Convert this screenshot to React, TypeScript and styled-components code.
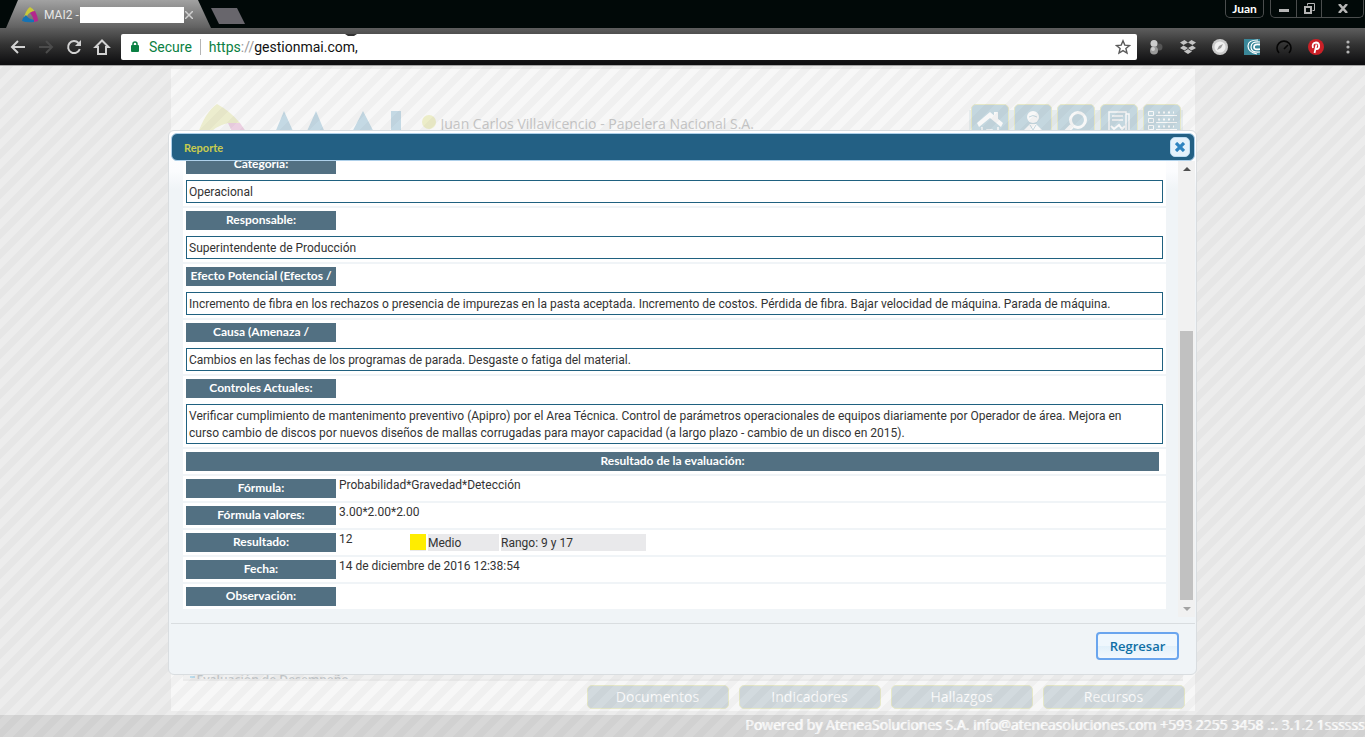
import React from "react";
import styled, { createGlobalStyle } from "styled-components";

const bodyFont = 'Roboto, "Open Sans", sans-serif';
const labelFont = 'Lato, "Open Sans", sans-serif';
const wideFont = '"Open Sans", "Noto Sans", sans-serif';

const GlobalStyle = createGlobalStyle`
  *, *::before, *::after { box-sizing: border-box; }
  html, body { margin: 0; height: 100%; }
  body { font-family: ${bodyFont}; font-size: 12px; color: #333; overflow: hidden; }
  button, input { font: inherit; color: inherit; margin: 0; padding: 0; border: 0; background: none; }
  a { color: inherit; text-decoration: none; }
  svg { display: block; flex: none; }
`;

const Screen = styled.div`
  display: flex;
  flex-direction: column;
  height: 100vh;
`;

/* ---------- browser chrome ---------- */

const TabStrip = styled.div`
  display: flex;
  align-items: flex-start;
  height: 28px;
  padding: 0 1px 0 6px;
  background: #010908;
`;

const Tab = styled.div`
  display: flex;
  align-items: center;
  gap: 6px;
  width: 205px;
  height: 28px;
  padding: 2px 17px 0 16px;
  color: #e6e6e6;
  background: linear-gradient(#a2a2a2, #606060);
  clip-path: polygon(12px 0, 192px 0, 205px 100%, 0 100%);
`;

const TabTitle = styled.span`
  display: flex;
  align-items: center;
  flex: 1;
  gap: 1px;
  white-space: nowrap;
`;

const Redaction = styled.span`
  flex: 1;
  height: 16px;
  margin-right: -6px;
  background: #fff;
`;

const IconButton = styled.button`
  display: flex;
  align-items: center;
  justify-content: center;
  flex: none;
  width: ${(p: { $size?: number }) => p.$size ?? 16}px;
  height: ${(p: { $size?: number }) => p.$size ?? 16}px;
`;

const NewTab = styled.button`
  width: 34px;
  height: 16px;
  margin-top: 8px;
  background: #68666c;
  clip-path: polygon(0 0, 26px 0, 34px 100%, 8px 100%);
`;

const WindowControls = styled.div`
  display: flex;
  gap: 6px;
  margin-left: auto;
`;

const ControlGroup = styled.div`
  display: flex;
  height: 18px;
  border: 1px solid #4a4d4d;
  border-top: 0;
  border-radius: 0 0 5px 5px;
  color: #fff;
  font-family: ${labelFont};
  font-weight: 700;
`;

const WindowButton = styled.button`
  display: flex;
  align-items: center;
  justify-content: center;
  width: ${(p: { $width: number }) => p.$width}px;
  height: 17px;
  & + & { border-left: 1px solid #4a4d4d; }
`;

const Toolbar = styled.div`
  display: flex;
  align-items: center;
  height: 38px;
  padding: 0 9px 0 8px;
  background: linear-gradient(#5e5e5e, #333 45%, #0f0f11 95%);
  border-bottom: 1px solid #a5a5a5;
`;

const NavButtons = styled.div`
  display: flex;
  gap: 8px;
  padding-right: 9px;
`;

const AddressBar = styled.div`
  position: relative;
  display: flex;
  align-items: center;
  flex: 1;
  height: 26px;
  padding: 0 6px 0 8px;
  background: #fff;
  border-radius: 2px;
  font-size: 14px;
  color: #111;
`;

const Secure = styled.span`
  padding: 0 8px;
  border-right: 1px solid #b5b5b5;
  margin-right: 8px;
  line-height: 16px;
  color: #0b8043;
`;

const Scheme = styled.span`
  color: #0b8043;
  i { font-style: normal; color: #999; }
`;

const UrlInput = styled.input`
  flex: 1;
  min-width: 0;
  outline: none;
`;

const PatchEdge = styled.svg`
  position: absolute;
  left: 223px;
  top: 0;
`;

const Extensions = styled.div`
  display: flex;
  gap: 16px;
  padding-left: 11px;
`;

/* ---------- page behind the dialog ---------- */

const Page = styled.div`
  position: relative;
  display: flex;
  flex-direction: column;
  flex: 1;
  min-height: 0;
  padding-top: 3px;
  background: #ececec;
  font-family: ${wideFont};
`;

const Sheet = styled.div`
  display: flex;
  flex-direction: column;
  flex: 1;
  min-height: 0;
  width: 1024px;
  max-width: 100%;
  margin: 0 auto 4px;
  background: #f7f7f7;
`;

const SheetHeader = styled.header`
  display: flex;
  align-items: flex-start;
  height: 96px;
  padding: 35px 12px 0 26px;
`;

const UserName = styled.div`
  display: flex;
  gap: 3px;
  flex: 1;
  padding-top: 10px;
  font-size: 14px;
  line-height: 20px;
  color: #c6c6c6;
`;

const Shortcuts = styled.nav`
  display: flex;
  gap: 5px;
  padding: 0 2px;
  background: linear-gradient(transparent 6px, #e6ecee 6px);
`;

const Shortcut = styled.a`
  display: flex;
  justify-content: center;
  width: 38px;
  height: 38px;
  padding-top: 6px;
  border: 1px solid #e6e8c8;
  border-radius: 5px;
  background: #c4d7df;
`;

const Panel = styled.section`
  display: flex;
  flex-direction: column;
  justify-content: flex-end;
  flex: 1;
  min-height: 0;
  margin: 0 12px;
  border-bottom: 2px solid #ebebeb;
  background: #f0f0f0;
`;

const PanelLink = styled.a`
  display: flex;
  gap: 2px;
  height: 6px;
  padding-left: 7px;
  overflow: hidden;
  line-height: 14px;
  font-weight: 600;
  color: #c4c8cb;
`;

const SheetNav = styled.nav`
  display: flex;
  justify-content: flex-end;
  gap: 10px;
  padding: 4px 10px 2px;
`;

const NavLink = styled.a`
  width: 142px;
  height: 24px;
  border: 1px solid #e6e8c8;
  border-radius: 5px;
  background: #d2dade;
  color: #fbfbfb;
  font-size: 14px;
  line-height: 21px;
  text-align: center;
`;

const PageFooter = styled.footer`
  height: 22px;
  padding-left: 745px;
  overflow: hidden;
  white-space: nowrap;
  background: #d7d7d7;
  color: #fbfbfb;
  font-size: 14px;
  line-height: 20px;
  text-shadow: 1px 0 0 #f8f8f8;
`;

/* ---------- modal dialog ---------- */

const Overlay = styled.div`
  position: absolute;
  inset: 0;
  display: flex;
  justify-content: center;
  padding: 64px 0 62px;
  background: linear-gradient(
      135deg,
      transparent 25%,
      rgba(0, 0, 0, 0.028) 25%,
      rgba(0, 0, 0, 0.028) 50%,
      transparent 50%,
      transparent 75%,
      rgba(0, 0, 0, 0.028) 75%
    )
    0 14px / 20px 20px;
`;

const Dialog = styled.div`
  display: flex;
  flex-direction: column;
  width: 1029px;
  max-width: 100%;
  padding: 2px 1px 2px 2px;
  border: 1px solid #d9dde0;
  border-radius: 6px;
  background: linear-gradient(#fff, #fbfcfe 40px, #f0f4f7 58px);
  font-family: ${bodyFont};
`;

const TitleBar = styled.div`
  display: flex;
  align-items: center;
  justify-content: space-between;
  flex: none;
  height: 28px;
  padding: 0 4px 0 12px;
  border: 1px solid #aed0ea;
  border-radius: 6px;
  background: #236084;
`;

const Title = styled.h1`
  margin: 0;
  font-family: ${labelFont};
  font-size: 11px;
  font-weight: 700;
  color: #c9cc4e;
`;

const CloseButton = styled.button`
  display: flex;
  align-items: center;
  justify-content: center;
  width: 20px;
  height: 20px;
  border: 1px solid #bcdcf2;
  border-radius: 5px;
  background: #e4f1fb;
`;

const Body = styled.div`
  display: flex;
  flex: 1;
  min-height: 0;
  margin-bottom: 6px;
`;

const Viewport = styled.div`
  display: flex;
  flex-direction: column;
  justify-content: flex-end;
  flex: 1;
  min-width: 0;
  padding: 0 12px 8px;
  overflow: hidden;
`;

const Fields = styled.dl`
  display: flex;
  flex-direction: column;
  gap: 2px;
  margin: 0;
`;

const Row = styled.div`
  display: flex;
  flex-direction: ${(p: { $stacked?: boolean }) => (p.$stacked ? "column" : "row")};
  flex: none;
  gap: ${(p: { $stacked?: boolean }) => (p.$stacked ? "6px" : "3px")};
  padding: 0 3px 3px;
  background: #fff;
`;

const Label = styled.dt`
  flex: none;
  width: 150px;
  height: 19px;
  margin-top: 3px;
  background: #527082;
  color: #fff;
  font-family: ${labelFont};
  font-weight: 700;
  line-height: 18px;
  text-align: center;
  white-space: nowrap;
`;

const Banner = styled(Label)`
  flex: 1;
  margin-right: 4px;
`;

const BoxedValue = styled.dd`
  margin: 0;
  padding: 3px 12px 1px 2px;
  border: 1px solid #1f6180;
  line-height: 17px;
`;

const Value = styled.dd`
  display: flex;
  margin: 0;
  padding-top: 1px;
  line-height: 17px;
`;

const Score = styled.span`
  width: 71px;
`;

const Rating = styled.span`
  display: flex;
  align-self: flex-start;
  gap: 2px;
  margin-top: 3px;
  line-height: 19px;
`;

const Swatch = styled.span`
  width: 16px;
  height: 17px;
  background: #ffed00;
  border-bottom: 1px solid #e9e9eb;
`;

const RatingCell = styled.span`
  width: ${(p: { $width: number }) => p.$width}px;
  height: 17px;
  background: #e9e9eb;
`;

const Scrollbar = styled.div`
  display: flex;
  flex-direction: column;
  align-items: center;
  width: 17px;
  background: #f1f1f1;
`;

const Track = styled.div`
  display: flex;
  flex-direction: column;
  justify-content: flex-end;
  flex: 1;
  padding-bottom: 1px;
`;

const Thumb = styled.div`
  width: 13px;
  height: calc(64% - 2px);
  background: #c1c1c1;
`;

const ButtonPane = styled.div`
  display: flex;
  justify-content: flex-end;
  flex: none;
  height: 49px;
  padding: 8px 16px 0;
  border-top: 1px solid #d9dde0;
`;

const BackButton = styled.button`
  width: 83px;
  height: 28px;
  border: 2px solid #6aa5ee;
  border-radius: 4px;
  background: linear-gradient(#eff7fd 50%, #e1f0fa 50%, #f2f8fd);
  color: #0f6fa5;
  font-family: ${wideFont};
  font-size: 13px;
  font-weight: 600;
  line-height: 22px;
`;

type Entry = { label: string; value: string };

const textEntries: Entry[] = [
  { label: "Categoría:", value: "Operacional" },
  { label: "Responsable:", value: "Superintendente de Producción" },
  {
    label: "Efecto Potencial (Efectos /",
    value:
      "Incremento de fibra en los rechazos o presencia de impurezas en la pasta aceptada. Incremento de costos. Pérdida de fibra. Bajar velocidad de máquina. Parada de máquina.",
  },
  {
    label: "Causa (Amenaza /",
    value: "Cambios en las fechas de los programas de parada. Desgaste o fatiga del material.",
  },
  {
    label: "Controles Actuales:",
    value:
      "Verificar cumplimiento de mantenimento preventivo (Apipro) por el Area Técnica. Control de parámetros operacionales de equipos diariamente por Operador de área. Mejora en curso cambio de discos por nuevos diseños de mallas corrugadas para mayor capacidad (a largo plazo - cambio de un disco en 2015).",
  },
];

const Favicon = () => (
  <svg width="16" height="16" viewBox="0 0 16 16">
    <path d="M4 5Q6 1 8 0q4 2 5 5-5-1-8 4L2 10z" fill="#c9c93a" />
    <path d="M13 4q3 6 3 10l-4 1q-1-6-4-9 2-2 5-2z" fill="#b3278c" />
    <path d="M0 14q1-4 4-6 2 4 8 5v2q-7 1-12-1z" fill="#1573b5" />
  </svg>
);

const NavIcon = ({ d, color = "#d2d2d2" }: { d: string; color?: string }) => (
  <svg width="20" height="20" viewBox="0 0 20 20" fill="none" stroke={color} strokeWidth="2">
    <path d={d} />
  </svg>
);

const Chrome = () => (
  <>
    <TabStrip>
      <Tab>
        <Favicon />
        <TabTitle>
          MAI2 -<Redaction />
        </TabTitle>
        <IconButton $size={10} aria-label="Cerrar pestaña">
          <svg width="8" height="8" viewBox="0 0 8 8" stroke="#d0d0d0" strokeWidth="1.5">
            <path d="M0 0l8 8M8 0L0 8" />
          </svg>
        </IconButton>
      </Tab>
      <NewTab aria-label="Nueva pestaña" />
      <WindowControls>
        <ControlGroup>
          <WindowButton $width={37}>Juan</WindowButton>
        </ControlGroup>
        <ControlGroup>
          <WindowButton $width={25} aria-label="Minimizar">
            <svg width="10" height="10"><rect y="5" width="10" height="3" fill="#b5b5b5" /></svg>
          </WindowButton>
          <WindowButton $width={25} aria-label="Restaurar">
            <svg width="11" height="11" fill="none" stroke="#b5b5b5">
              <path d="M3.5 2.5v-2h7v7h-2" />
              <rect x="1" y="4" width="6" height="6" strokeWidth="2" />
            </svg>
          </WindowButton>
          <WindowButton $width={42} aria-label="Cerrar">
            <svg width="10" height="9" stroke="#b5b5b5" strokeWidth="2.5"><path d="M1 0l8 9M9 0L1 9" /></svg>
          </WindowButton>
        </ControlGroup>
      </WindowControls>
    </TabStrip>
    <Toolbar>
      <NavButtons>
        <IconButton $size={20} aria-label="Atrás"><NavIcon d="M17 10H4M10 4l-6 6 6 6" /></IconButton>
        <IconButton $size={20} aria-label="Adelante"><NavIcon d="M3 10h13M10 4l6 6-6 6" color="#4b4b4b" /></IconButton>
        <IconButton $size={20} aria-label="Recargar">
          <svg width="20" height="20" viewBox="0 0 20 20">
            <path d="M14.500 6A6 6 0 1 0 15.800 12" fill="none" stroke="#d2d2d2" strokeWidth="2" />
            <path d="M17 3v6h-6z" fill="#d2d2d2" />
          </svg>
        </IconButton>
        <IconButton $size={20} aria-label="Inicio"><NavIcon d="M10 3.500L3.500 10H6v7h8v-7h2.500z" /></IconButton>
      </NavButtons>
      <AddressBar>
        <svg width="12" height="14" viewBox="0 0 12 14">
          <rect x="2" y="5" width="8" height="7" rx="1" fill="#0b8043" />
          <path d="M4 6V4a2 2 0 0 1 4 0v2" fill="none" stroke="#0b8043" strokeWidth="1.500" />
        </svg>
        <Secure>Secure</Secure>
        <Scheme>https<i>://</i></Scheme>
        <UrlInput aria-label="Dirección" defaultValue="gestionmai.com," />
        <PatchEdge width="14" height="3"><path d="M1 0h12l-3 2H4z" fill="#333" /></PatchEdge>
        <IconButton aria-label="Favorito">
          <svg width="16" height="16" viewBox="0 0 16 16" fill="none" stroke="#5a5a5a" strokeWidth="1.400">
            <path d="M8 1.800l1.800 4.300 4.700.4-3.600 3 1.100 4.600-4-2.500-4 2.500 1.100-4.600-3.600-3 4.700-.4z" />
          </svg>
        </IconButton>
      </AddressBar>
      <Extensions>
        <IconButton aria-label="Extensión">
          <svg width="16" height="16">
            <circle cx="11" cy="8" r="3.500" fill="#555" />
            <circle cx="6" cy="4.500" r="3.500" fill="#ccc" />
            <circle cx="6" cy="11.500" r="4" fill="#999" />
            <circle cx="5" cy="10" r="2" fill="#ccc" />
          </svg>
        </IconButton>
        <IconButton aria-label="Dropbox">
          <svg width="16" height="16" fill="#c4c4c4">
            <path d="M4.500 1L8 3.500 3.500 6 0 3.500zM11.500 1L16 3.500 12.500 6 8 3.500zM3.500 6.500L8 9l-3.500 2.500L0 9zM12.500 6.500L16 9l-4.500 2.500L8 9zM8 10l4 2.500L8 15l-4-2.500z" />
          </svg>
        </IconButton>
        <IconButton aria-label="Brújula">
          <svg width="16" height="16">
            <circle cx="8" cy="8" r="8" fill="#c9c9c9" />
            <circle cx="8" cy="8" r="5.500" fill="#efefef" />
            <path d="M11 5L9 9l-4 2 2-4z" fill="#999" />
          </svg>
        </IconButton>
        <IconButton aria-label="Espiral">
          <svg width="16" height="16" fill="none" stroke="#fff">
            <rect width="16" height="16" fill="#3a8799" stroke="none" />
            <path d="M14 1Q4 1 4 7t9 8M16 3Q7 2 7 8t9 5" strokeWidth="1.200" />
            <path d="M16 5.500q-6-1-6 2.500t6 2" strokeWidth="1.800" />
          </svg>
        </IconButton>
        <IconButton aria-label="Velocidad">
          <svg width="16" height="16" fill="none" stroke="#050505" strokeWidth="1.600">
            <path d="M3 14a7 7 0 1 1 10 0M8 10l4-4" />
          </svg>
        </IconButton>
        <IconButton aria-label="Pinterest">
          <svg width="16" height="16">
            <circle cx="8" cy="8" r="8" fill="#cb2027" />
            <path d="M5 9Q3.500 4 8 3.500c4 0 4 6 1 6.500-1 0-1.500-.5-1.500-1M8.500 5.500L6.500 14" fill="none" stroke="#fff" strokeWidth="1.800" />
          </svg>
        </IconButton>
        <IconButton aria-label="Menú">
          <svg width="16" height="16" fill="#b5b5b5">
            <circle cx="8" cy="3" r="1.600" /><circle cx="8" cy="8" r="1.600" /><circle cx="8" cy="13" r="1.600" />
          </svg>
        </IconButton>
      </Extensions>
    </Toolbar>
  </>
);

const Logo = () => (
  <svg width="225" height="40" viewBox="0 0 225 40">
    <path d="M0 32Q8 8 20 0q13 7 23 19H31Q18 22 10 32z" fill="#ecedce" />
    <path d="M31 19h12l9 13H37z" fill="#ecd0e2" />
    <path d="M75 36L87 7l13 29zM106 36l13-29 12 29zM151 36l15-29 15 29zM194 7h10v29h-10z" fill="#c4d9e4" />
  </svg>
);

const Background = () => (
  <>
    <Sheet>
      <SheetHeader>
        <Logo />
        <UserName>
          <svg width="16" height="16"><circle cx="7" cy="8" r="7" fill="#ecedc8" /></svg>
          Juan Carlos Villavicencio - Papelera Nacional S.A.
        </UserName>
        <Shortcuts>
          <Shortcut href="#" aria-label="Inicio">
            <svg width="26" height="28" fill="#f8f8f8">
              <path d="M13 1l13 11-2 4L13 7 2 16l-2-4zM17 1h4v8h-4z" />
              <path d="M5 16v12M21 16v12M10 28v-9h5v9" stroke="#f8f8f8" strokeWidth="1.500" fill="none" />
            </svg>
          </Shortcut>
          <Shortcut href="#" aria-label="Usuario">
            <svg width="26" height="28">
              <circle cx="13" cy="6" r="6" fill="#f8f8f8" />
              <path d="M9 6q4-3 8 0" stroke="#c4d7df" fill="none" />
              <path d="M4 28v-9l6-6h6l6 6v9z" fill="#f8f8f8" />
              <path d="M10 14l3 5 3-5" fill="none" stroke="#c4d7df" />
            </svg>
          </Shortcut>
          <Shortcut href="#" aria-label="Buscar">
            <svg width="28" height="28" fill="none" stroke="#f8f8f8">
              <circle cx="16" cy="9" r="7.500" strokeWidth="3" />
              <path d="M10 15L1 24" strokeWidth="5" />
            </svg>
          </Shortcut>
          <Shortcut href="#" aria-label="Reportes">
            <svg width="22" height="28" fill="none" stroke="#f8f8f8" strokeWidth="1.500">
              <path d="M1 28V1h17v27M18 3h3v25M4 5h11M4 9h11" />
              <path d="M3 15l3 3 5-4 3 4 3-3" strokeWidth="2" />
            </svg>
          </Shortcut>
          <Shortcut href="#" aria-label="Lista">
            <svg width="32" height="28" fill="none" stroke="#f8f8f8">
              <path d="M2.500.5h5v4h-5zM2.500 7.500h5v4h-5zM2.500 14.500h5v4h-5zM10 4.500h21M10 11.500h21M10 18.500h21" />
              <path d="M12 1.500h16M12 8.500h16M12 15.500h16" strokeWidth="2" strokeDasharray="2 3" />
            </svg>
          </Shortcut>
        </Shortcuts>
      </SheetHeader>
      <Panel>
        <PanelLink href="#">
          <svg width="5" height="5"><rect y="3" width="5" height="2" fill="#bcdcec" /></svg>
          Evaluación de Desempeño
        </PanelLink>
      </Panel>
      <SheetNav>
        {["Documentos", "Indicadores", "Hallazgos", "Recursos"].map((name) => (
          <NavLink key={name} href="#">{name}</NavLink>
        ))}
      </SheetNav>
    </Sheet>
    <PageFooter>
      Powered by AteneaSoluciones S.A. info@ateneasoluciones.com +593 2255 3458 .:. 3.1.2 1ssssss
    </PageFooter>
  </>
);

const ReportDialog = () => (
  <Dialog role="dialog" aria-labelledby="dialog-title">
    <TitleBar>
      <Title id="dialog-title">Reporte</Title>
      <CloseButton aria-label="Cerrar">
        <svg width="10" height="10" stroke="#2e83c0" strokeWidth="3.200"><path d="M1 1l8 8M9 1L1 9" /></svg>
      </CloseButton>
    </TitleBar>
    <Body>
      <Viewport>
        <Fields>
          {textEntries.map((e) => (
            <Row key={e.label} $stacked>
              <Label>{e.label}</Label>
              <BoxedValue>{e.value}</BoxedValue>
            </Row>
          ))}
          <Row><Banner>Resultado de la evaluación:</Banner></Row>
          <Row><Label>Fórmula:</Label><Value>Probabilidad*Gravedad*Detección</Value></Row>
          <Row><Label>Fórmula valores:</Label><Value>3.00*2.00*2.00</Value></Row>
          <Row>
            <Label>Resultado:</Label>
            <Value>
              <Score>12</Score>
              <Rating>
                <Swatch />
                <RatingCell $width={71}>Medio</RatingCell>
                <RatingCell $width={145}>Rango: 9 y 17</RatingCell>
              </Rating>
            </Value>
          </Row>
          <Row><Label>Fecha:</Label><Value>14 de diciembre de 2016 12:38:54</Value></Row>
          <Row><Label>Observación:</Label><Value /></Row>
        </Fields>
      </Viewport>
      <Scrollbar>
        <IconButton aria-label="Subir">
          <svg width="8" height="4"><path d="M0 4l4-4 4 4z" fill="#505050" /></svg>
        </IconButton>
        <Track><Thumb /></Track>
        <IconButton aria-label="Bajar">
          <svg width="8" height="4"><path d="M0 0l4 4 4-4z" fill="#a3a3a3" /></svg>
        </IconButton>
      </Scrollbar>
    </Body>
    <ButtonPane>
      <BackButton>Regresar</BackButton>
    </ButtonPane>
  </Dialog>
);

export default function App() {
  return (
    <Screen>
      <GlobalStyle />
      <Chrome />
      <Page>
        <Background />
        <Overlay>
          <ReportDialog />
        </Overlay>
      </Page>
    </Screen>
  );
}
